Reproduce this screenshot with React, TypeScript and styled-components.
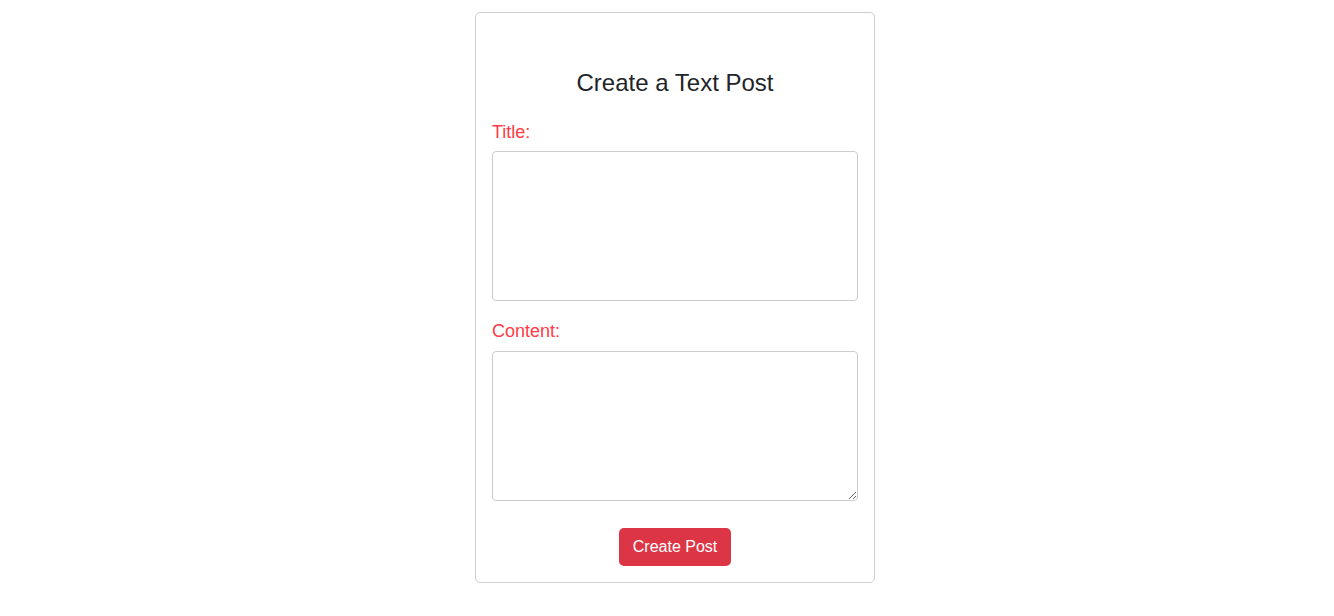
import React from "react";
import styled, { createGlobalStyle } from "styled-components";

const Global = createGlobalStyle`
  html, body { margin: 0; padding: 0; background: #fff; }
  body { font-family: "Liberation Sans", Arial, sans-serif; }
`;

const Page = styled.div`
  display: flex;
  justify-content: center;
  padding: 12px 0 0 16px;
`;

const Card = styled.form`
  width: 400px;
  box-sizing: border-box;
  border: 1px solid #cfcfcf;
  border-radius: 5px;
  padding: 56px 16px 16px;
  display: flex;
  flex-direction: column;
`;

const Heading = styled.h2`
  margin: 0 0 25px;
  font-size: 24px;
  font-weight: 400;
  line-height: 28px;
  text-align: center;
  color: #212529;
`;

const Label = styled.label<{ $gap: number; $below: number }>`
  display: block;
  margin-top: ${(p) => p.$gap}px;
  margin-bottom: ${(p) => p.$below}px;
  font-size: 18px;
  line-height: 21px;
  color: #ff3b46;
`;

const Area = styled.textarea<{ $noResize?: boolean }>`
  display: block;
  width: 100%;
  height: 150px;
  box-sizing: border-box;
  border: 1px solid #cccccc;
  border-radius: 4px;
  padding: 8px;
  font-family: "Liberation Sans", Arial, sans-serif;
  font-size: 16px;
  resize: ${(p) => (p.$noResize ? "none" : "both")};
  outline: none;
`;

const Actions = styled.div`
  display: flex;
  justify-content: center;
  margin-top: 27px;
`;

const Button = styled.button`
  height: 38px;
  padding: 0 13.5px;
  border: none;
  border-radius: 5px;
  background: #dc3545;
  color: #fff;
  font-family: "Liberation Sans", Arial, sans-serif;
  font-size: 16px;
  cursor: pointer;
`;

export default function App() {
  return (
    <>
      <Global />
      <Page>
        <Card onSubmit={(e) => e.preventDefault()}>
          <Heading>Create a Text Post</Heading>
          <Label $gap={0} $below={8} htmlFor="title">Title:</Label>
          <Area id="title" $noResize />
          <Label $gap={20} $below={9} htmlFor="content">Content:</Label>
          <Area id="content" />
          <Actions>
            <Button type="submit">Create Post</Button>
          </Actions>
        </Card>
      </Page>
    </>
  );
}
